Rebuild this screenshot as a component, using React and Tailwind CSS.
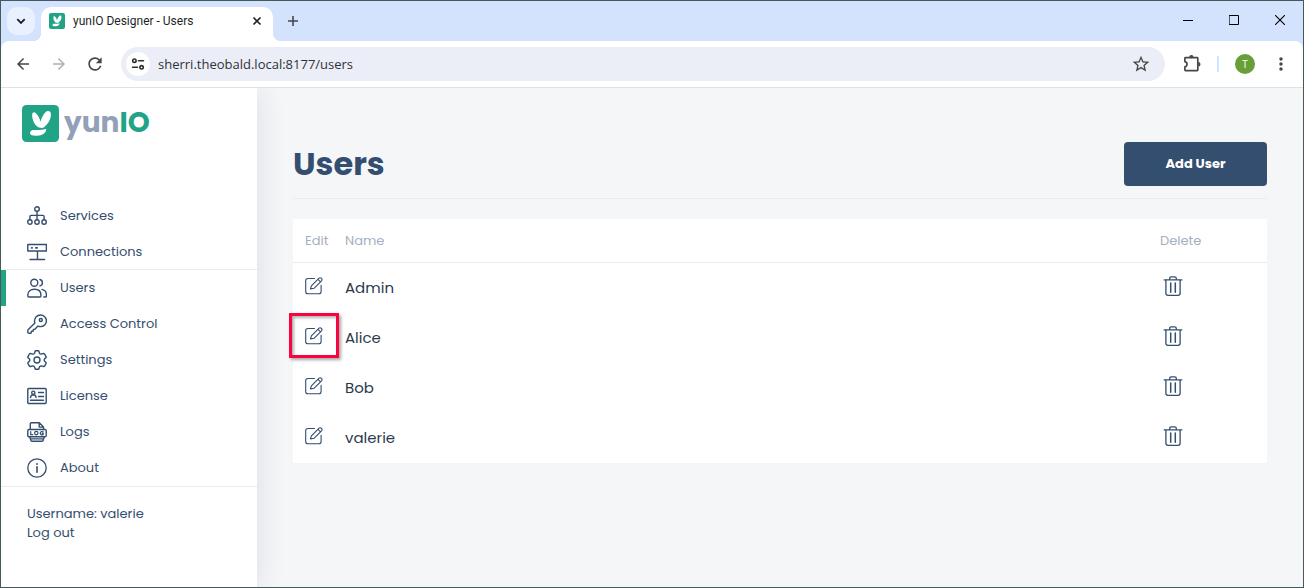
import React from "react";
import {
  MdArrowBack,
  MdArrowForward,
  MdRefresh,
  MdStarBorder,
  MdMoreVert,
} from "react-icons/md";

function LineIcon({ children, size = "size-5", width = 1.3, box = "0 0 20 20" }) {
  return (
    <svg
      viewBox={box}
      className={`${size} shrink-0`}
      fill="none"
      stroke="currentColor"
      strokeWidth={width}
      strokeLinecap="round"
      strokeLinejoin="round"
      aria-hidden="true"
    >
      {children}
    </svg>
  );
}

const ServicesIcon = () => (
  <LineIcon width={1.4}>
    <circle cx="10" cy="3" r="2.3" />
    <path d="M10 5.400v8M2.900 13.400v-2.800q0-1.200 1.200-1.200h11.800q1.200 0 1.200 1.200v2.800" />
    <circle cx="2.900" cy="16" r="2.200" />
    <circle cx="10" cy="16" r="2.200" />
    <circle cx="17.100" cy="16" r="2.200" />
  </LineIcon>
);

const ConnectionsIcon = () => (
  <LineIcon width={1.4}>
    <path d="M.8 2.500h18.600v6.500H.8zM10.500 9v8M3 17.500h14.600" />
    <path d="M4.600 5.800h.6M8.800 5.800h1.400" strokeWidth="1.700" />
  </LineIcon>
);

const UsersIcon = () => (
  <LineIcon width={1.4}>
    <circle cx="7.300" cy="4.700" r="3.500" />
    <path d="M12.900 1.500a3.300 3.300 0 0 1 0 6.400M1.800 19h11.200q.900 0 .900-.900v-1.200c0-3.600-2.700-5.700-6.500-5.700S.800 13.300.800 16.900V18.100q0 .900 1 .900zM15 11.400c2.600.600 4.400 2.600 4.400 5.400v1.300q0 .900-.900.900h-1.700" />
  </LineIcon>
);

const KeyIcon = () => (
  <LineIcon width={1.4}>
    <path d="M13.400 1C10 1 7.500 3.600 7.500 6.900q0 1 .4 2L1.300 15.500q-.5.500-.5 1.200V18q0 1.200 1.200 1.200h1.500q.900 0 .900-.9v-1h1.100q.8 0 .8-.8v-1.100h1q.5 0 .9-.4l2.700-2.900q1.200.500 2.500.500c3.400 0 6-2.500 6-5.800S16.800 1 13.400 1z" />
    <circle cx="13.800" cy="6" r="1.500" />
  </LineIcon>
);

const GearIcon = () => (
  <LineIcon width={1.4}>
    <path d="M8.300.8h3.400l.8 2.400q.3.800 1.400.9l2.900-.6q.5 0 .8.500l1.500 2.800q.2.500-.2.900l-1.400 1.400q-.7.900 0 1.800l1.400 1.500q.4.400.2.900l-1.500 2.800q-.3.500-.8.400l-2.900-.6q-1 .1-1.400 1l-.8 2.300H8.300l-.8-2.300q-.4-.9-1.400-1l-2.900.6q-.5.100-.8-.4L.9 13.300q-.2-.5.200-.900l1.400-1.500q.7-.9 0-1.800L1.100 7.700q-.4-.4-.2-.9L2.400 4q.3-.5.800-.5l2.900.6q1.100-.1 1.400-.9z" />
    <circle cx="10" cy="10" r="3" />
  </LineIcon>
);

const LicenseIcon = () => (
  <LineIcon width={1.4}>
    <rect x=".8" y="2.500" width="18.400" height="15" rx="1" />
    <circle cx="6.300" cy="6.700" r="1.600" />
    <path d="M3.500 11.500q.3-2.700 2.800-2.800 2.500.1 2.800 2.800M11.500 6.500h5M11.500 10.500h5M3.500 14.200h13" />
  </LineIcon>
);

const LogsIcon = () => (
  <LineIcon width={1.4}>
    <path d="M3.300 7.200V2q0-1.200 1.200-1.200h7.800L16.500 5v2.200M12.200.9v4.200h4.200" />
    <path d="M2 7.500h16q1.200 0 1.200 1.200v4.800q0 1.200-1.200 1.200H2q-1.200 0-1.200-1.200V8.700q0-1.200 1.200-1.200z" />
    <g strokeWidth="1.200">
      <path d="M3.700 9.500v3.200h2" />
      <circle cx="9.300" cy="11.100" r="1.700" />
      <path d="M16.200 9.900q-2.600-1-3 1.200.3 2.400 3 1.500v-1.200h-1" />
    </g>
    <path d="M2.800 14.900l1 3.400q.2.900 1.100.9h10.200q.9 0 1.100-.9l1-3.400M4 16.900h12" />
  </LineIcon>
);

const AboutIcon = () => (
  <LineIcon width={1.3}>
    <circle cx="10" cy="10" r="9.200" />
    <path d="M10 8.700v5.600" strokeWidth="1.600" />
    <path d="M10 5.900v.1" strokeWidth="1.900" />
  </LineIcon>
);

const EditIcon = () => (
  <LineIcon size="size-[18px]" box="0 0 18 18" width={1.1}>
    <path d="M9.500 1.500H3Q.7 1.500.7 3.800v10.700q0 2.300 2.300 2.300h10.800q2.300 0 2.300-2.300V8.300" />
    <path d="M5.500 11.900l.9-3.100 7.400-7.500q1.200-1.100 2.600 0 1.300 1.200.1 2.600L9 11.300zM12.900 2.300l2.700 2.600" />
  </LineIcon>
);

const TrashIcon = () => (
  <LineIcon width={1.3}>
    <path d="M1.200 3.900h17.600M6.700 3.700V2.500Q6.700.8 8.300.8h3.400q1.600 0 1.600 1.700v1.200M2.900 4v13.200q0 2.100 2.100 2.100h10q2.100 0 2.100-2.100V4" />
    <path d="M7.700 6.900v9.400M12.300 6.900v9.400" strokeWidth="1.500" />
  </LineIcon>
);

const PuzzleIcon = () => (
  <LineIcon width={1.7}>
    <path d="M3.500 3.700h11.700q.6 0 .6.600v11.800q0 .6-.6.600H3.500q-.6 0-.6-.600v-3.300a2.600 2.600 0 0 0 0-5.100V4.300q0-.6.600-.600z" />
    <path
      d="M7.200 3.200a2.200 2.200 0 0 1 4.400 0zM16.300 8a2.200 2.200 0 0 1 0 4.400z"
      fill="currentColor"
      stroke="none"
    />
  </LineIcon>
);

function BrandMark({ className }) {
  return (
    <svg viewBox="0 0 37 37" className={`${className} shrink-0`} aria-hidden="true">
      <rect width="37" height="37" rx="4.500" fill="#21a386" />
      <path
        fill="#fff"
        d="M10.300 8.400c1-1.400 2.400-1.400 3.600-.1 2.500 2.500 3.900 5.400 4.700 8.500.9-3.700 2.400-7.300 5.300-10 1.500-1.300 4.600-1.100 4.900 1.700.6 5-2.300 9.900-6.400 13.500-1.200 1-2.500 1.100-4.200.8-5.200-.9-8.800-8.700-7.900-14.400z"
      />
      <path
        fill="#fff"
        d="M8 28.300c0-2.200 1.300-3.500 3.500-3.400 4 .2 8.200.2 12.700-1.200.3 3.600-2.900 6.100-7.200 6.800-4.400.7-8.600.2-9-2.200z"
      />
    </svg>
  );
}

function BrowserChrome() {
  return (
    <header className="bg-[#d3e3fd] font-['Open_Sans',sans-serif]">
      <div className="flex h-10 items-stretch">
        <button
          type="button"
          aria-label="Search tabs"
          className="mt-[6px] ml-[6px] flex size-7 items-center justify-center rounded-[10px] bg-[#e9f1fe] text-[#1f1f1f]"
        >
          <LineIcon size="size-[10px]" box="0 0 10 10" width={1.8}>
            <path d="M1.300 3.200L5 6.900l3.700-3.700" strokeLinecap="butt" strokeLinejoin="miter" />
          </LineIcon>
        </button>
        <div className="relative mt-[6px] ml-[6px] flex w-[232px] items-center rounded-t-[10px] bg-white pr-[10px] pb-[6px] pl-2">
          <span className="absolute bottom-0 -left-2 size-2 bg-[radial-gradient(circle_at_0_0,#d3e3fd_8px,#fff_8px)]" />
          <span className="absolute -right-2 bottom-0 size-2 bg-[radial-gradient(circle_at_100%_0,#d3e3fd_8px,#fff_8px)]" />
          <BrandMark className="size-4" />
          <span className="ml-2 flex-1 font-['Roboto',sans-serif] text-[12px] whitespace-nowrap text-[#1f1f1f]">
            yunIO Designer - Users
          </span>
          <button type="button" aria-label="Close tab" className="flex size-3 items-center justify-center text-[#1f1f1f]">
            <LineIcon size="size-[10px]" box="0 0 10 10" width={1.6}>
              <path d="M1.500 1.500l7 7M8.500 1.500l-7 7" strokeLinecap="butt" />
            </LineIcon>
          </button>
        </div>
        <button type="button" aria-label="New tab" className="mt-[6px] ml-[6px] flex size-7 items-center justify-center text-[#474747]">
          <LineIcon size="size-3" box="0 0 12 12" width={1.6}>
            <path d="M6 1v10M1 6h10" strokeLinecap="butt" />
          </LineIcon>
        </button>
        <div className="ml-auto flex pb-[2px] text-black">
          <button type="button" aria-label="Minimize" className="flex w-[46px] items-center justify-center">
            <LineIcon size="size-[10px]" box="0 0 10 10" width={1}>
              <path d="M0 5.500h10" strokeLinecap="butt" />
            </LineIcon>
          </button>
          <button type="button" aria-label="Maximize" className="flex w-[46px] items-center justify-center">
            <LineIcon size="size-[10px]" box="0 0 10 10" width={1}>
              <path d="M.5.5h9v9h-9z" />
            </LineIcon>
          </button>
          <button type="button" aria-label="Close" className="flex w-[46px] items-center justify-center">
            <LineIcon size="size-[10px]" box="0 0 10 10" width={1.1}>
              <path d="M0 0l10 10M10 0L0 10" strokeLinecap="butt" />
            </LineIcon>
          </button>
        </div>
      </div>
      <div className="flex h-[47px] items-center rounded-t-lg border-b border-[#dfe2e2] bg-white text-[#474747]">
        <div className="ml-3 flex gap-4">
          <button type="button" aria-label="Back" className="flex size-5 items-center justify-center">
            <MdArrowBack className="size-[18px]" />
          </button>
          <button type="button" aria-label="Forward" disabled className="flex size-5 items-center justify-center text-[#b0b0b0]">
            <MdArrowForward className="size-[18px]" />
          </button>
          <button type="button" aria-label="Reload" className="flex size-5 items-center justify-center">
            <MdRefresh className="size-5" />
          </button>
        </div>
        <div className="ml-4 flex h-[34px] flex-1 items-center rounded-full bg-[#ebeef7] pr-[14px] pl-[5px]">
          <button type="button" aria-label="View site information" className="flex size-6 items-center justify-center rounded-full bg-white text-[#303030]">
            <LineIcon size="size-[14px]" box="0 0 14 14" width={1.6}>
              <circle cx="3.400" cy="3.700" r="1.700" />
              <path d="M7.500 3.700h5M1.500 10.300h5" />
              <circle cx="10.600" cy="10.300" r="1.700" />
            </LineIcon>
          </button>
          <input
            type="text"
            aria-label="Address"
            defaultValue="sherri.theobald.local:8177/users"
            className="ml-2 min-w-0 flex-1 bg-transparent pt-px text-[13px] text-[#303238] outline-none"
          />
          <button type="button" aria-label="Bookmark this page">
            <MdStarBorder className="size-5" />
          </button>
        </div>
        <button type="button" aria-label="Extensions" className="ml-[17px]">
          <PuzzleIcon />
        </button>
        <span className="ml-[15px] h-4 w-[2px] bg-[#d3e3fd]" />
        <button type="button" aria-label="Profile" className="ml-4 flex size-5 items-center justify-center rounded-full bg-[#689f38] text-[10px] text-white">
          T
        </button>
        <button type="button" aria-label="Menu" className="mr-3 ml-4">
          <MdMoreVert className="size-5" />
        </button>
      </div>
    </header>
  );
}

const NAV = [
  { label: "Services", Icon: ServicesIcon },
  { label: "Connections", Icon: ConnectionsIcon, last: true },
  { label: "Users", Icon: UsersIcon, active: true },
  { label: "Access Control", Icon: KeyIcon },
  { label: "Settings", Icon: GearIcon },
  { label: "License", Icon: LicenseIcon },
  { label: "Logs", Icon: LogsIcon },
  { label: "About", Icon: AboutIcon },
];

function Sidebar() {
  return (
    <aside className="z-10 w-64 shrink-0 bg-white text-[13px] text-[#334e6e] shadow-[0_0_28px_rgba(40,50,70,0.12)]">
      <a href="#home" className="flex items-start gap-[5px] px-[21px] pt-[17px] text-[28px] leading-[35px] font-bold">
        <BrandMark className="size-[37px]" />
        <span className="text-[#92a1b9]">
          yun<span className="text-[#21a386]">IO</span>
        </span>
      </a>
      <nav className="mt-14 border-b border-[#e9ecef]">
        {NAV.map(({ label, Icon, active, last }) => (
          <a
            key={label}
            href={`#${label}`}
            aria-current={active ? "page" : undefined}
            className={`flex h-9 items-center gap-[13px] border-l-[5px] pl-[21px] ${
              active ? "border-l-[#21a386]" : "border-l-transparent"
            } ${last ? "border-b border-b-[#e9ecef]" : ""}`}
          >
            <Icon />
            {label}
          </a>
        ))}
      </nav>
      <div className="px-[26px] pt-[17px] leading-[19px]">
        <p>Username: valerie</p>
        <a href="#logout">Log out</a>
      </div>
    </aside>
  );
}

const USERS = [
  { name: "Admin" },
  { name: "Alice", highlighted: true },
  { name: "Bob" },
  { name: "valerie" },
];

function UsersPage() {
  return (
    <main className="min-w-0 flex-1 px-9 pt-[54px]">
      <div className="flex items-center justify-between border-b border-[#e9ecef] pb-3">
        <h1 className="text-[32px] leading-10 font-bold text-[#334e6e]">Users</h1>
        <button type="button" className="h-11 w-[143px] rounded bg-[#334e6e] text-[13px] font-bold text-white">
          Add User
        </button>
      </div>
      <table className="mt-5 w-full table-fixed border-separate border-spacing-0 bg-white text-left text-[#2c3a4b]">
        <colgroup>
          <col className="w-10" />
          <col />
          <col className="w-[119px]" />
        </colgroup>
        <thead>
          <tr className="h-11 text-[13px] text-[#a3b0c2]">
            <th className="border-b border-[#e9ecef] p-0 pl-3 font-normal">Edit</th>
            <th className="border-b border-[#e9ecef] p-0 pl-3 font-normal">Name</th>
            <th className="border-b border-[#e9ecef] p-0 pl-3 font-normal">Delete</th>
          </tr>
        </thead>
        <tbody>
          {USERS.map(({ name, highlighted }) => (
            <tr key={name} className="h-[50px] text-[15px]">
              <td className="relative p-0 pb-1 pl-3 text-[#334e6e]">
                <button type="button" aria-label={`Edit ${name}`} className="block">
                  <EditIcon />
                </button>
                {highlighted && (
                  <span className="pointer-events-none absolute top-0 -left-1 h-[45px] w-[50px] border-[3px] border-[#fb0340] shadow-[2px_2px_3px_rgba(0,0,0,0.35),inset_2px_2px_3px_rgba(0,0,0,0.3)]" />
                )}
              </td>
              <td className="p-0 pl-3">{name}</td>
              <td className="p-0 pb-1 pl-[15px] text-[#334e6e]">
                <button type="button" aria-label={`Delete ${name}`} className="block">
                  <TrashIcon />
                </button>
              </td>
            </tr>
          ))}
        </tbody>
      </table>
    </main>
  );
}

export default function App() {
  return (
    <div className="flex min-h-screen flex-col border border-[#465a5a] bg-[#f4f6f8] font-['Poppins','Inter',sans-serif]">
      <BrowserChrome />
      <div className="flex flex-1 overflow-hidden">
        <Sidebar />
        <UsersPage />
      </div>
    </div>
  );
}
